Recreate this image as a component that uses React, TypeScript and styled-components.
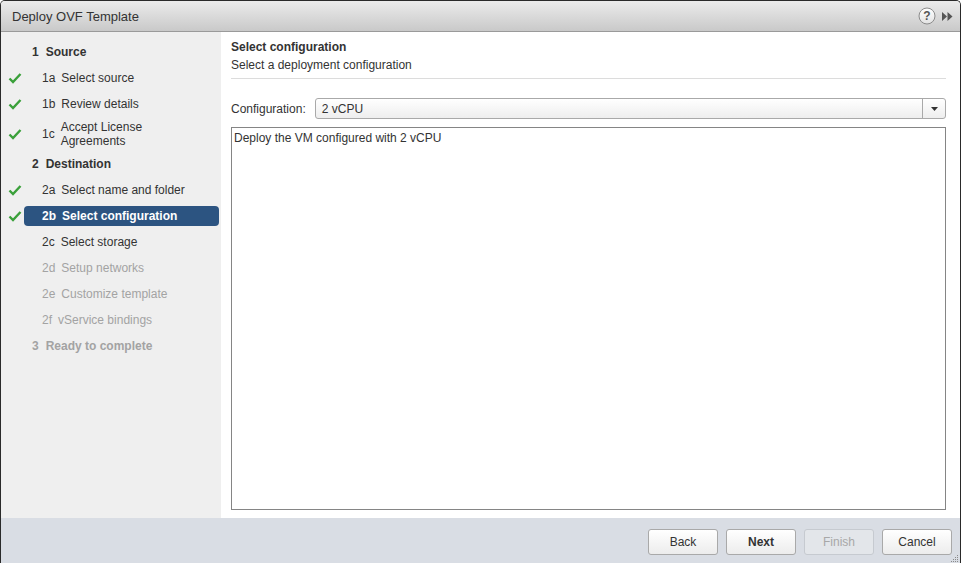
import styled, { createGlobalStyle } from 'styled-components';

const Global = createGlobalStyle`
  html, body {
    margin: 0;
    padding: 0;
    background: #ffffff;
  }
  body {
    font-family: "Liberation Sans", Arial, sans-serif;
    font-size: 12px;
    color: #333333;
  }
`;

const Window = styled.div`
  width: 961px;
  height: 563px;
  box-sizing: border-box;
  display: flex;
  flex-direction: column;
  border-left: 1px solid #2a2a2a;
  border-top: 1px solid #2a2a2a;
  border-right: 1px solid #2a2a2a;
  border-radius: 5px 5px 0 0;
  overflow: hidden;
  position: relative;
`;

const TitleBar = styled.div`
  height: 30px;
  flex: none;
  display: flex;
  align-items: center;
  justify-content: space-between;
  padding: 0 6px 0 11px;
  background: linear-gradient(#ebebeb, #c9c9c9);
  border-bottom: 1px solid #9a9a9a;
`;

const Title = styled.div`
  font-size: 13px;
  color: #333333;
`;

const TitleTools = styled.div`
  display: flex;
  align-items: center;
  gap: 5px;
`;

const Body = styled.div`
  flex: 1;
  display: flex;
  min-height: 0;
`;

const Sidebar = styled.div`
  width: 220px;
  flex: none;
  background: #efefef;
  padding-top: 7px;
  box-sizing: border-box;
`;

const StepRow = styled.div<{ $tall?: boolean }>`
  height: ${(p) => (p.$tall ? 34 : 26)}px;
  display: flex;
  align-items: center;
`;

const CheckCell = styled.div`
  width: 23px;
  flex: none;
  display: flex;
  align-items: center;
  padding-left: 7px;
  box-sizing: border-box;
`;

const StepItem = styled.div<{ $level: 0 | 1; $state: 'done' | 'active' | 'todo' | 'off'; $selected?: boolean; $tall?: boolean }>`
  flex: 1;
  margin-right: 2px;
  height: ${(p) => (p.$tall ? 30 : 20)}px;
  display: flex;
  align-items: center;
  box-sizing: border-box;
  padding-left: ${(p) => (p.$level === 0 ? 8 : 18)}px;
  border-radius: 4px;
  background: ${(p) => (p.$selected ? '#2c5481' : 'transparent')};
  color: ${(p) => (p.$selected ? '#ffffff' : p.$state === 'off' ? '#a3a3a3' : '#333333')};
  font-weight: ${(p) => (p.$level === 0 || p.$selected ? 'bold' : 'normal')};
`;

const StepNum = styled.span<{ $level: 0 | 1 }>`
  margin-right: ${(p) => (p.$level === 0 ? 7 : 6)}px;
`;

const StepLabel = styled.span`
  line-height: 14px;
`;

const Content = styled.div`
  flex: 1;
  display: flex;
  flex-direction: column;
  padding: 8px 14px 8px 10px;
  min-width: 0;
`;

const Heading = styled.div`
  font-weight: bold;
  line-height: 14px;
`;

const SubHeading = styled.div`
  line-height: 14px;
  margin-top: 4px;
`;

const Divider = styled.div`
  height: 1px;
  background: #dcdcdc;
  margin-top: 6px;
`;

const ConfigRow = styled.div`
  display: flex;
  align-items: center;
  margin-top: 19px;
  gap: 9px;
`;

const Select = styled.div`
  flex: 1;
  height: 21px;
  box-sizing: border-box;
  border: 1px solid #a9a9a9;
  border-radius: 3px;
  background: linear-gradient(#ffffff, #eeeeee);
  display: flex;
  align-items: center;
`;

const SelectValue = styled.div`
  flex: 1;
  padding-left: 6px;
  color: #333333;
`;

const SelectArrow = styled.div`
  width: 22px;
  height: 100%;
  border-left: 1px solid #a9a9a9;
  display: flex;
  align-items: center;
  justify-content: center;
`;

const Description = styled.div`
  flex: 1;
  margin-top: 8px;
  border: 1px solid #858585;
  padding: 3px 2px;
  line-height: 14px;
`;

const Footer = styled.div`
  height: 45px;
  flex: none;
  background: #d9dde4;
  display: flex;
  align-items: center;
  justify-content: flex-end;
  gap: 8px;
  padding-right: 8px;
  position: relative;
`;

const Button = styled.button<{ $primary?: boolean }>`
  width: 70px;
  height: 26px;
  box-sizing: border-box;
  border: 1px solid ${(p) => (p.disabled ? '#c6cad0' : '#a9a9a9')};
  border-radius: 3px;
  background: ${(p) => (p.disabled ? '#e3e6ea' : 'linear-gradient(#ffffff, #ececec)')};
  color: ${(p) => (p.disabled ? '#a8a8a8' : '#333333')};
  font-family: "Liberation Sans", Arial, sans-serif;
  font-size: 12px;
  font-weight: ${(p) => (p.$primary ? 'bold' : 'normal')};
  padding: 0;
  margin-top: 2px;
`;

const Grip = styled.div`
  position: absolute;
  right: 1px;
  bottom: 1px;
  width: 10px;
  height: 10px;
`;

function Check() {
  return (
    <svg width="14" height="12" viewBox="0 0 14 12">
      <path d="M1.5 6.5 L5 10 L12.5 2" fill="none" stroke="#3aa03a" strokeWidth="2.4" />
    </svg>
  );
}

type Step = {
  num: string;
  label: React.ReactNode;
  level: 0 | 1;
  state: 'done' | 'active' | 'todo' | 'off';
  tall?: boolean;
};

const steps: Step[] = [
  { num: '1', label: 'Source', level: 0, state: 'todo' },
  { num: '1a', label: 'Select source', level: 1, state: 'done' },
  { num: '1b', label: 'Review details', level: 1, state: 'done' },
  { num: '1c', label: <>Accept License<br />Agreements</>, level: 1, state: 'done', tall: true },
  { num: '2', label: 'Destination', level: 0, state: 'todo' },
  { num: '2a', label: 'Select name and folder', level: 1, state: 'done' },
  { num: '2b', label: 'Select configuration', level: 1, state: 'active' },
  { num: '2c', label: 'Select storage', level: 1, state: 'todo' },
  { num: '2d', label: 'Setup networks', level: 1, state: 'off' },
  { num: '2e', label: 'Customize template', level: 1, state: 'off' },
  { num: '2f', label: 'vService bindings', level: 1, state: 'off' },
  { num: '3', label: 'Ready to complete', level: 0, state: 'off' },
];

export default function App() {
  return (
    <>
      <Global />
      <Window>
        <TitleBar>
          <Title>Deploy OVF Template</Title>
          <TitleTools>
            <svg width="18" height="18" viewBox="0 0 18 18">
              <defs>
                <linearGradient id="hg" x1="0" y1="0" x2="0" y2="1">
                  <stop offset="0" stopColor="#ffffff" />
                  <stop offset="1" stopColor="#e2e2e2" />
                </linearGradient>
              </defs>
              <circle cx="9" cy="9" r="8" fill="url(#hg)" stroke="#8a8a8a" />
              <text x="9" y="13" textAnchor="middle" fontSize="12" fontWeight="bold" fill="#555" fontFamily="Liberation Sans, Arial, sans-serif">?</text>
            </svg>
            <svg width="13" height="11" viewBox="0 0 13 11">
              <path d="M1 1 L6 5.5 L1 10 Z M6.5 1 L11.5 5.5 L6.5 10 Z" fill="#555555" />
            </svg>
          </TitleTools>
        </TitleBar>
        <Body>
          <Sidebar>
            {steps.map((s) => (
              <StepRow key={s.num} $tall={s.tall}>
                <CheckCell>{(s.state === 'done' || s.state === 'active') && <Check />}</CheckCell>
                <StepItem
                  $level={s.level}
                  $state={s.state}
                  $selected={s.state === 'active'}
                  $tall={s.tall}
                >
                  <StepNum $level={s.level}>{s.num}</StepNum>
                  <StepLabel>{s.label}</StepLabel>
                </StepItem>
              </StepRow>
            ))}
          </Sidebar>
          <Content>
            <Heading>Select configuration</Heading>
            <SubHeading>Select a deployment configuration</SubHeading>
            <Divider />
            <ConfigRow>
              <span>Configuration:</span>
              <Select>
                <SelectValue>2 vCPU</SelectValue>
                <SelectArrow>
                  <svg width="7" height="4" viewBox="0 0 7 4">
                    <path d="M0 0 H7 L3.5 4 Z" fill="#333" />
                  </svg>
                </SelectArrow>
              </Select>
            </ConfigRow>
            <Description>Deploy the VM configured with 2 vCPU</Description>
          </Content>
        </Body>
        <Footer>
          <Button>Back</Button>
          <Button $primary>Next</Button>
          <Button disabled>Finish</Button>
          <Button>Cancel</Button>
          <Grip>
            <svg width="10" height="10" viewBox="0 0 10 10">
              {[
                [8, 2], [6, 4], [8, 4], [4, 6], [6, 6], [8, 6], [2, 8], [4, 8], [6, 8], [8, 8],
              ].map(([x, y]) => (
                <rect key={`${x}-${y}`} x={x} y={y} width="1" height="1" fill="#8a8a8a" />
              ))}
            </svg>
          </Grip>
        </Footer>
      </Window>
    </>
  );
}
